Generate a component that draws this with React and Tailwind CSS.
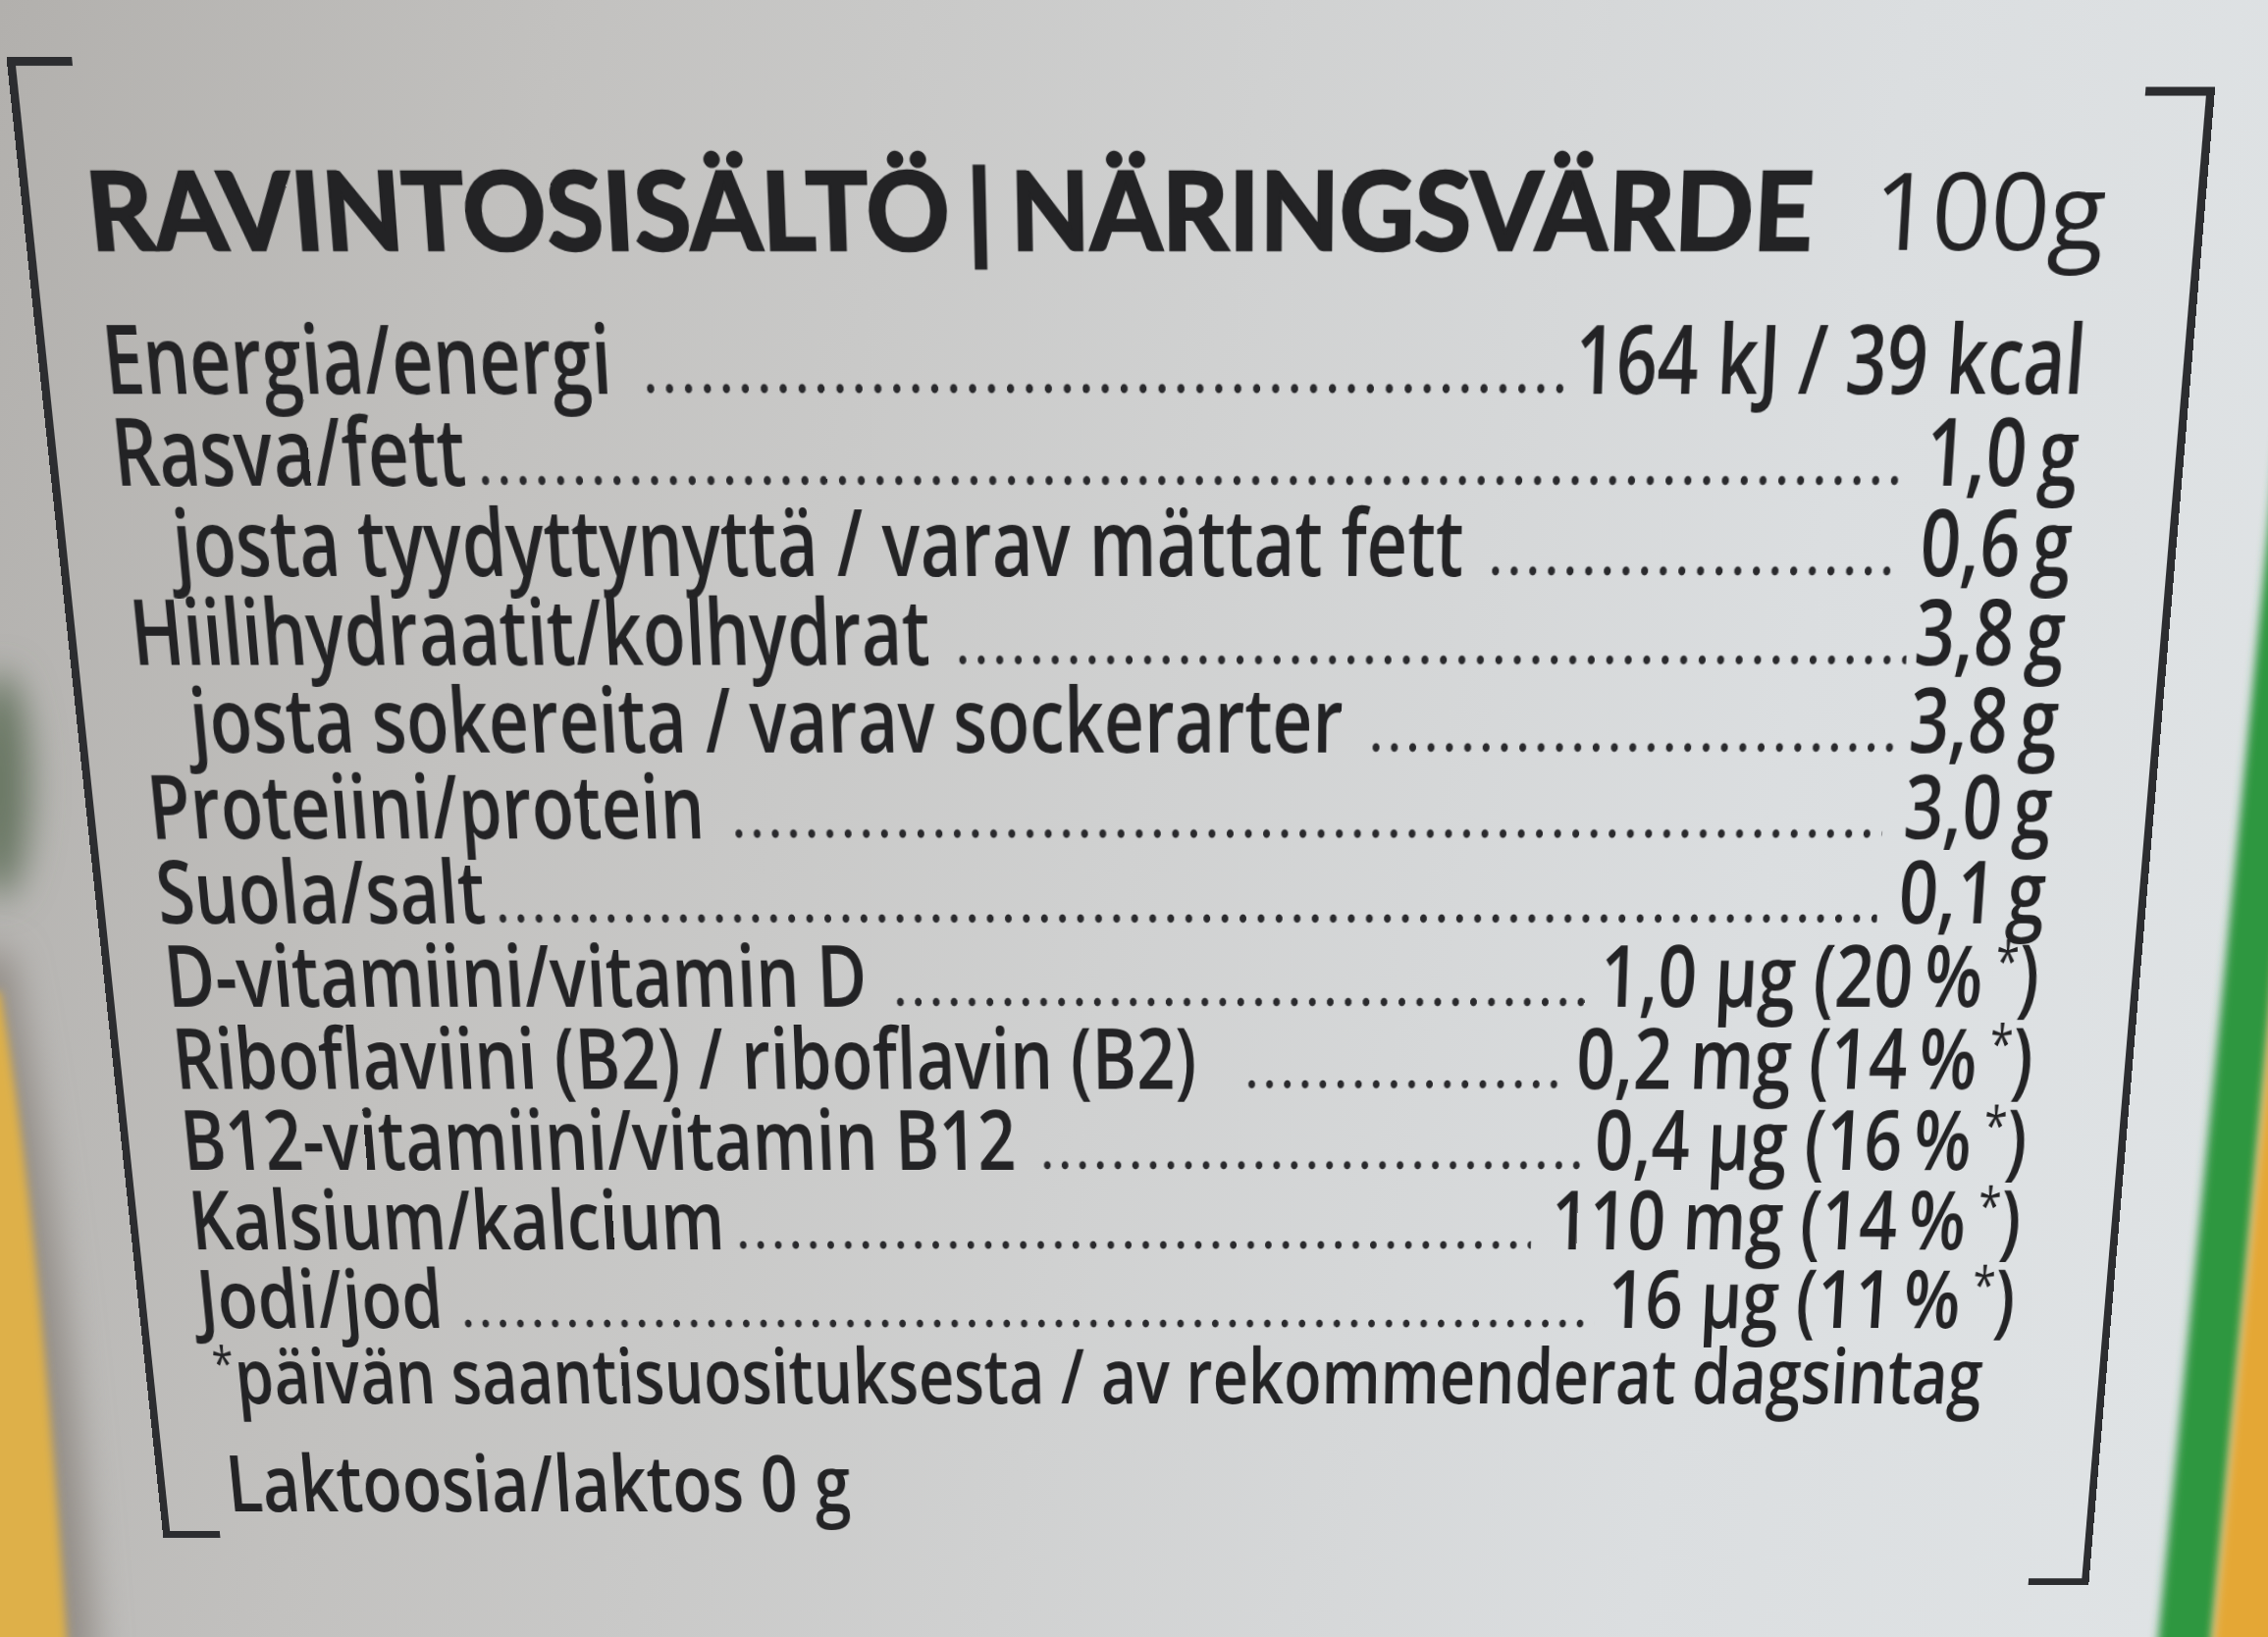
const rows = [
  { label: "Energia/energi", value: "164 kJ / 39 kcal", lead: "ml-[36px] mr-[9px]" },
  { label: "Rasva/fett", value: "1,0\u2009g", lead: "ml-[12px] mr-[27px]" },
  { label: "josta tyydyttynyttä / varav mättat fett", value: "0,6\u2009g", lead: "ml-[30px] mr-[27px]", sub: true },
  { label: "Hiilihydraatit/kolhydrat", value: "3,8\u2009g", lead: "ml-[30px] mr-[9px]" },
  { label: "josta sokereita / varav sockerarter", value: "3,8\u2009g", lead: "ml-[32px] mr-[9px]", sub: true },
  { label: "Proteiini/protein", value: "3,0\u2009g", lead: "ml-[32px] mr-[27px]" },
  { label: "Suola/salt", value: "0,1\u2009g", lead: "ml-[9px] mr-[27px]" },
  { label: "D-vitamiini/vitamin D", value: "1,0 µg", pct: "20", lead: "ml-[32px] mr-[9px]" },
  { label: "Riboflaviini (B2) / riboflavin (B2)", value: "0,2 mg", pct: "14", lead: "ml-[63px] mr-[12px]" },
  { label: "B12-vitamiini/vitamin B12", value: "0,4 µg", pct: "16", lead: "ml-[30px] mr-[9px]" },
  { label: "Kalsium/kalcium", value: "110 mg", pct: "14", lead: "ml-[12px] mr-[27px]" },
  { label: "Jodi/jod", value: "16 µg", pct: "11", lead: "ml-[21px] mr-[18px]" },
];

function Leader({ className }) {
  return (
    <span
      className={`h-[10px] min-w-0 flex-1 bg-[radial-gradient(circle_at_center,#2a2a2d_4px,transparent_4.8px)] bg-[length:24px_10px] bg-repeat-x ${className}`}
    />
  );
}

function Row({ row }) {
  return (
    <div className={`flex items-baseline ${row.sub ? "pl-[66px]" : ""}`}>
      <span className="whitespace-nowrap">{row.label}</span>
      <Leader className={row.lead} />
      <span className="whitespace-nowrap">
        {row.value}
        {row.pct && (
          <>
            {" "}({row.pct}
            {"\u2009"}%{"\u2009"}
            <sup className="text-[0.62em] font-normal">*</sup>)
          </>
        )}
      </span>
    </div>
  );
}

function Backdrop() {
  return (
    <svg className="absolute inset-0 h-full w-full" viewBox="0 0 2311 1668" preserveAspectRatio="none">
      <defs>
        <filter id="soft" x="-50%" y="-50%" width="200%" height="200%">
          <feGaussianBlur stdDeviation="5" />
        </filter>
        <filter id="softer" x="-100%" y="-50%" width="300%" height="200%">
          <feGaussianBlur stdDeviation="18" />
        </filter>
      </defs>
      <ellipse cx="0" cy="800" rx="30" ry="115" fill="#667560" filter="url(#softer)" />
      <path d="M-30 970 L10 970 C46 1150 76 1380 98 1700 L-30 1700 Z" fill="#928c86" filter="url(#softer)" />
      <path d="M-30 1010 L0 1010 C26 1160 50 1390 70 1700 L-30 1700 Z" fill="#deb04a" filter="url(#soft)" />
      <path d="M2340 253 L2196 1700 L2252 1700 L2340 756 Z" fill="#2f9741" filter="url(#soft)" />
      <path d="M2340 756 L2252 1700 L2340 1700 Z" fill="#e4a735" filter="url(#soft)" />
    </svg>
  );
}

export default function App() {
  return (
    <div className="relative h-[1668px] w-[2311px] overflow-hidden bg-[linear-gradient(100deg,#b2b0ad_0%,#c2c1bf_22%,#d0d1d1_50%,#dbdee0_75%,#e0e4e6_100%)] pl-[94px] pt-[120px] text-[#232325] [perspective-origin:1260px_884px] [perspective:2000px]">
      <Backdrop />

      <div className="relative flex h-[1528px] w-[2096px] [transform:rotateX(-10.3deg)]">
        <div className="-mt-[17px] mb-[24px] w-[62px] flex-none border-y-[8px] border-l-[8px] border-[#2c2d30]" />

        <div className="min-w-0 flex-1 pr-[29px] pt-[71px]">
          <div className="flex items-baseline justify-between">
            <span className="whitespace-nowrap font-['Lato',sans-serif] text-[99px] font-bold leading-[99px] tracking-[0.004em] [-webkit-text-stroke:2.5px_#232325]">
              RAVINTOSISÄLTÖ<span className="mx-[16px]">|</span>NÄRINGSVÄRDE
            </span>
            <span className="whitespace-nowrap font-['Open_Sans',sans-serif] text-[99px] leading-[99px]">100g</span>
          </div>

          <div className="ml-[1px] mt-[45px] w-[130%] origin-left scale-x-[0.77] pr-[15px] font-['Open_Sans',sans-serif] text-[91px] font-semibold leading-[88px]">
            {rows.map((row) => (
              <Row key={row.label} row={row} />
            ))}
            <div className="whitespace-nowrap pl-[12px] text-[86px]">
              <sup className="text-[0.62em] font-normal">*</sup>päivän saantisuosituksesta / av rekommenderat dagsintag
            </div>
            <div className="mt-[35px] whitespace-nowrap pl-[15px]">Laktoosia/laktos 0 g</div>
          </div>
        </div>

        <div className="mt-[10px] -mb-[32px] w-[66px] flex-none border-y-[8px] border-r-[8px] border-[#2c2d30]" />
      </div>
    </div>
  );
}
